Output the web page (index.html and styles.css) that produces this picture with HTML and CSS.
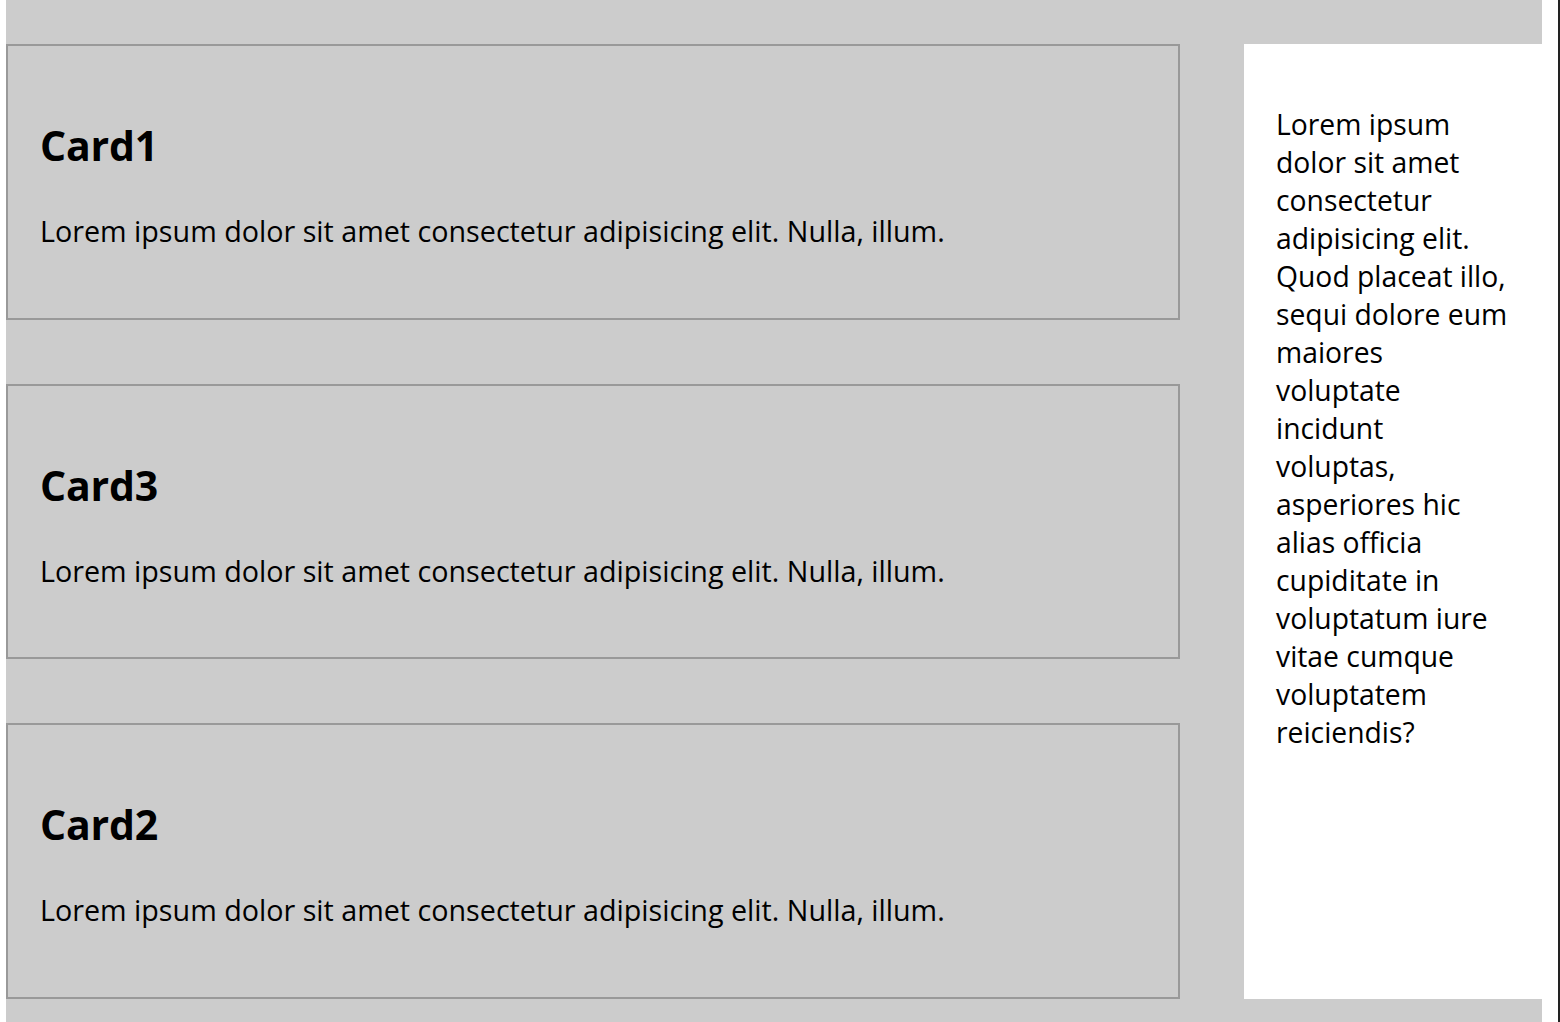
FILE: index.html
```html
<!DOCTYPE html>
<html>
<head>
<meta charset="utf-8">
<link rel="stylesheet" href="styles.css">
</head>
<body>
<div class="wrap">
  <main class="cards">
    <div class="card">
      <h2>Card1</h2>
      <p>Lorem ipsum dolor sit amet consectetur adipisicing elit. Nulla, illum.</p>
    </div>
    <div class="card">
      <h2>Card3</h2>
      <p>Lorem ipsum dolor sit amet consectetur adipisicing elit. Nulla, illum.</p>
    </div>
    <div class="card">
      <h2>Card2</h2>
      <p>Lorem ipsum dolor sit amet consectetur adipisicing elit. Nulla, illum.</p>
    </div>
  </main>
  <aside class="side">
    <p>Lorem ipsum<br>dolor sit amet<br>consectetur<br>adipisicing elit.<br>Quod placeat illo,<br>sequi dolore eum<br>maiores<br>voluptate<br>incidunt<br>voluptas,<br>asperiores hic<br>alias officia<br>cupiditate in<br>voluptatum iure<br>vitae cumque<br>voluptatem<br>reiciendis?</p>
  </aside>
</div>
</body>
</html>
```
FILE: styles.css
```css
html {
  border-right: 2px solid #222;
  background: #fff;
}
body {
  margin: 0;
  font-family: "Open Sans", "Noto Sans", sans-serif;
  color: #000;
  overflow: hidden;
  height: 1022px;
}
.wrap {
  margin-left: 6px;
  width: 1536px;
  background: #ccc;
  padding: 44px 0 40px;
  display: flex;
  gap: 64px;
  align-items: stretch;
}
.cards {
  width: 1174px;
  display: flex;
  flex-direction: column;
  gap: 64px;
}
.card {
  border: 2px solid #999;
  height: 196.67px;
  padding: 75px 32px 0;
  box-sizing: content-box;
}
.card h2 {
  font-size: 41px;
  font-weight: 700;
  margin: 0 0 43px;
  line-height: 48px;
  letter-spacing: -0.2px;
}
.card p {
  font-size: 28.7px;
  margin: 0;
  line-height: 38px;
}
.side {
  width: 298px;
  background: #fff;
  padding: 32px;
  box-sizing: border-box;
}
.side p {
  margin: 29px 0 0;
  font-size: 28.3px;
  line-height: 38px;
  white-space: nowrap;
}
```
